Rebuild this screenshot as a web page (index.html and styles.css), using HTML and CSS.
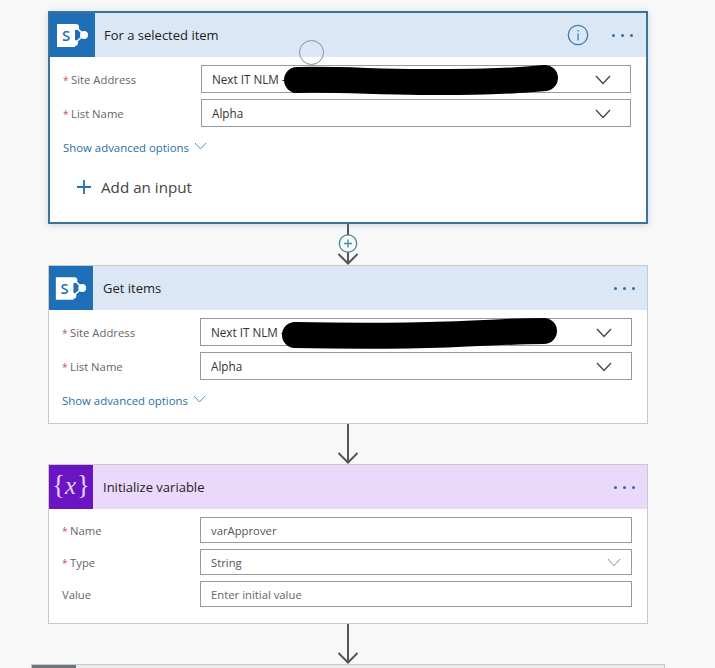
FILE: index.html
```html
<!DOCTYPE html>
<html lang="en">
<head>
<meta charset="utf-8">
<title>Flow</title>
<link rel="stylesheet" href="styles.css">
</head>
<body>
<main class="flow">
  <section class="card card-active">
    <header class="head head-blue">
      <div class="tile tile-blue">
        <svg class="sp" viewBox="0 0 45 44" width="45" height="44"><path d="M26 14 L34 22 L25 30" fill="none" stroke="#fff" stroke-width="1.600"/><circle cx="26" cy="14" r="3" fill="#fff"/><circle cx="25" cy="30" r="3" fill="#fff"/><circle cx="34" cy="22" r="4" fill="#fff"/><rect x="7" y="11" width="18" height="23" fill="#fff"/><text x="16" y="28" class="sp-s">S</text></svg>
      </div>
      <h2 class="title title-a">For a selected item</h2>
      <svg class="info" viewBox="0 0 22 22" width="22" height="22"><circle cx="11" cy="11" r="9.700" fill="none" stroke="#3f80ae" stroke-width="1.300"/><rect x="10.400" y="9.500" width="1.300" height="7" fill="#3f80ae"/><rect x="10.400" y="6" width="1.300" height="1.600" fill="#3f80ae"/></svg>
      <div class="dots dots-a"><i></i><i></i><i></i></div>
    </header>
    <div class="body">
      <div class="row">
        <label class="label"><span class="req">*</span>Site Address</label>
        <div class="field">Next IT NLM -
          <svg class="chev" viewBox="0 0 16 10" width="16" height="10"><path d="M1 1 L8 8.500 L15 1" /></svg>
          <svg class="blob blob-a" viewBox="0 0 275 32" width="275" height="32"><path d="M13 16 C60 15 90 18 136 18 S220 18 261 14"/></svg>
        </div>
      </div>
      <div class="row">
        <label class="label"><span class="req">*</span>List Name</label>
        <div class="field">Alpha
          <svg class="chev" viewBox="0 0 16 10" width="16" height="10"><path d="M1 1 L8 8.500 L15 1" /></svg>
        </div>
      </div>
      <div class="advanced">Show advanced options
        <svg class="adv-chev" viewBox="0 0 13 8" width="13" height="8"><path d="M1 1 L6.500 7 L12 1"/></svg>
      </div>
      <div class="add">
        <svg class="plus" viewBox="0 0 14 14" width="14" height="14"><path d="M7 0 V14 M0 7 H14"/></svg>
        <span>Add an input</span>
      </div>
    </div>
    <span class="cursor"></span>
  </section>

  <svg class="link link-plus" viewBox="0 0 24 41" width="24" height="41"><path class="wire" d="M12 0 V40 M2.500 30 L12 39.500 L21.500 30"/><circle cx="12" cy="19.500" r="8.700" fill="#f8f8f8" stroke="#3f7f95" stroke-width="1.200"/><path d="M12 15.500 V23.500 M8 19.500 H16" stroke="#3f8fb0" stroke-width="1.400" fill="none"/></svg>

  <section class="card">
    <header class="head head-blue">
      <div class="tile tile-blue tile-narrow">
        <svg class="sp" viewBox="0 0 45 44" width="44" height="44"><path d="M26 14 L34 22 L25 30" fill="none" stroke="#fff" stroke-width="1.600"/><circle cx="26" cy="14" r="3" fill="#fff"/><circle cx="25" cy="30" r="3" fill="#fff"/><circle cx="34" cy="22" r="4" fill="#fff"/><rect x="7" y="11" width="18" height="23" fill="#fff"/><text x="16" y="28" class="sp-s">S</text></svg>
      </div>
      <h2 class="title">Get items</h2>
      <div class="dots"><i></i><i></i><i></i></div>
    </header>
    <div class="body">
      <div class="row">
        <label class="label"><span class="req">*</span>Site Address</label>
        <div class="field">Next IT NLM -
          <svg class="chev" viewBox="0 0 16 10" width="16" height="10"><path d="M1 1 L8 8.500 L15 1" /></svg>
          <svg class="blob blob-b" viewBox="0 0 275 32" width="275" height="32"><path d="M13 18 C60 19 120 19 165 17.500 S230 14 262 14"/></svg>
        </div>
      </div>
      <div class="row">
        <label class="label"><span class="req">*</span>List Name</label>
        <div class="field">Alpha
          <svg class="chev" viewBox="0 0 16 10" width="16" height="10"><path d="M1 1 L8 8.500 L15 1" /></svg>
        </div>
      </div>
      <div class="advanced">Show advanced options
        <svg class="adv-chev" viewBox="0 0 13 8" width="13" height="8"><path d="M1 1 L6.500 7 L12 1"/></svg>
      </div>
    </div>
  </section>

  <svg class="link" viewBox="0 0 24 40" width="24" height="40"><path class="wire" d="M12 0 V39 M2.500 29 L12 38.500 L21.500 29"/></svg>

  <section class="card card-var">
    <header class="head head-purple">
      <div class="tile tile-purple tile-narrow"><span class="brace">{</span><span class="var-x">x</span><span class="brace">}</span></div>
      <h2 class="title">Initialize variable</h2>
      <div class="dots"><i></i><i></i><i></i></div>
    </header>
    <div class="body">
      <div class="row row-small">
        <label class="label"><span class="req">*</span>Name</label>
        <div class="field field-small">varApprover</div>
      </div>
      <div class="row row-small">
        <label class="label"><span class="req">*</span>Type</label>
        <div class="field field-small">String
          <svg class="chev chev-light" viewBox="0 0 16 10" width="14" height="9"><path d="M1 1 L8 8.500 L15 1" /></svg>
        </div>
      </div>
      <div class="row row-small">
        <label class="label">Value</label>
        <div class="field field-small placeholder">Enter initial value</div>
      </div>
    </div>
  </section>

  <svg class="link" viewBox="0 0 24 40" width="24" height="40"><path class="wire" d="M12 0 V39 M2.500 29 L12 38.500 L21.500 29"/></svg>

  <section class="next-card"><div class="next-tile"></div></section>
</main>
</body>
</html>
```

FILE: styles.css
```css
* { box-sizing: border-box; }
html, body { margin: 0; height: 668px; overflow: hidden; background: #f8f8f8; }
body { font-family: "Open Sans", "Noto Sans", sans-serif; color: #333; }

.flow { width: 696px; padding-top: 11px; display: flex; flex-direction: column; align-items: center; }

.card { position: relative; width: 600px; height: 159px; background: #fff; border: 1px solid #c9c9c9; }
.card-active { height: 213px; border: 2px solid #3d7399; box-shadow: 0 1px 6px rgba(90, 130, 170, .3); }
.card-var { height: 160px; }

.head { height: 44px; display: flex; align-items: center; }
.head-blue { background: #dce7f5; }
.head-purple { background: #ead9fa; }

.tile { width: 45px; height: 44px; display: flex; align-items: center; justify-content: center; flex: none; }
.tile-narrow { width: 44px; }
.tile-blue { background: #1f6fb7; }
.tile-purple { background: #6a14c4; color: #e4cffa; }
.sp { display: block; }
.sp-s { font: 600 15px "Open Sans", sans-serif; fill: #1f6fb7; text-anchor: middle; }
.brace { font: 27px/1 "Liberation Serif", serif; margin-top: -3px; }
.var-x { font: italic 25px/1 "Liberation Serif", serif; margin-top: -3px; padding-right: 1px; }

.title { margin: 0 0 0 10px; font-size: 13px; font-weight: 400; color: #222; flex: 1; }
.title-a { margin-left: 9px; }

.info { flex: none; margin-right: 23px; }
.dots { display: flex; gap: 6px; margin-right: 12px; flex: none; }
.dots-a { margin-right: 13px; }
.dots i { width: 3px; height: 3px; border-radius: 50%; background: #2b6ea8; }

.body { padding: 8px 15px 0 13px; display: flex; flex-direction: column; gap: 6px; }

.row { display: flex; align-items: center; }
.label { width: 138px; flex: none; font-size: 11.300px; color: #666; }
.req { display: inline-block; width: 8px; font-size: 10px; color: #c2574f; }

.field { position: relative; flex: 1; height: 28px; padding-left: 10px; display: flex; align-items: center; font-size: 11.700px; color: #333; background: #fff; border: 1px solid #999; }
.field-small { height: 26px; font-size: 11.300px; color: #555; }
.placeholder { color: #666; }

.chev { position: absolute; right: 19px; top: 9px; fill: none; stroke: #444; stroke-width: 1.300; }
.chev-light { right: 10px; top: 8px; stroke: #777; stroke-width: 1; }

.blob { position: absolute; top: -2px; fill: none; stroke: #000; stroke-width: 26; stroke-linecap: round; }
.blob-a { left: 82px; }
.blob-b { left: 81px; }

.advanced { display: flex; align-items: center; gap: 5px; margin-top: 5px; height: 18px; font-size: 11.400px; color: #2b6f9e; }
.adv-chev { fill: none; stroke: #5b93bd; stroke-width: 1; margin-top: -3px; }

.add { display: flex; align-items: center; gap: 10px; margin: 15px 0 0 14px; font-size: 15.200px; color: #444; }
.plus { fill: none; stroke: #2472b3; stroke-width: 1.800; }

.cursor { position: absolute; left: 249px; top: 27px; width: 25px; height: 25px; border-radius: 50%; border: 1px solid #8a8f96; }

.link { display: block; flex: none; }
.wire { fill: none; stroke: #555; stroke-width: 2; }

.next-card { width: 634px; height: 4px; flex: none; background: #ececec; border: 1px solid #c9c9c9; border-bottom: 0; }
.next-tile { width: 44px; height: 100%; background: #6f737a; }
```
